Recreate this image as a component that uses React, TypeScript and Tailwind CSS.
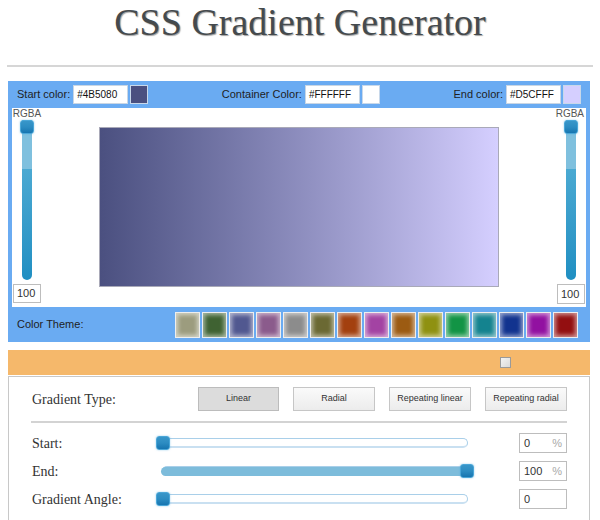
import React from "react";

const swatches = [
  "#9c9c7e",
  "#3f6232",
  "#515890",
  "#8b5b8c",
  "#8c8c8c",
  "#6b6933",
  "#a3400f",
  "#a343a3",
  "#9c5b12",
  "#8f9111",
  "#129445",
  "#14838f",
  "#12338f",
  "#9211a1",
  "#930f10",
];

function Thumb({ className = "" }: { className?: string }) {
  return (
    <div
      className={
        "w-[14px] h-[14px] rounded-[3px] border border-[#4aa6d8] bg-gradient-to-b from-[#3896c9] via-[#2c8cc2] to-[#1675b0] shadow-[0_0_2px_rgba(80,170,220,0.6)] " +
        className
      }
    />
  );
}

function VSlider() {
  return (
    <div className="relative w-[14px] h-[160px] flex justify-center">
      <div className="w-[10px] h-full rounded-b-full rounded-t-[3px] overflow-hidden flex flex-col">
        <div className="h-[49px] bg-[#7fc0de]" />
        <div className="flex-1 bg-gradient-to-b from-[#4aa9d2] to-[#1f8fc2]" />
      </div>
      <Thumb className="absolute top-0 left-0 h-[13px]" />
    </div>
  );
}

function HSlider({ full }: { full?: boolean }) {
  return (
    <div className="relative w-[318px] h-[14px] flex items-center">
      <div className="mx-[6px] flex-1 h-[10px] rounded-full border border-[#a9cfe9] border-b-2 border-b-[#c9e0f1] bg-white overflow-hidden">
        {full && <div className="w-full h-full bg-[#7dbcdb]" />}
      </div>
      {full && (
        <div className="absolute left-[5px] right-[6px] top-[3px] h-[9px] rounded-full bg-[#7dbcdb]" />
      )}
      <Thumb className={"absolute top-0 " + (full ? "right-0" : "left-0")} />
    </div>
  );
}

function ColorField({ label, value, color }: { label: string; value: string; color: string }) {
  return (
    <div className="flex items-center">
      <span className="text-[11px] text-[#1e1e1e]">{label}</span>
      <div className="ml-[3px] w-[55px] h-[19px] bg-white border border-[#c9d6e4] flex items-center pl-[3px] text-[10px] text-[#111]">
        {value}
      </div>
      <div
        className="ml-[2px] w-[18px] h-[19px] border border-[#c8d8ea]"
        style={{ backgroundColor: color }}
      />
    </div>
  );
}

function Btn({ label, active, w }: { label: string; active?: boolean; w: string }) {
  return (
    <div
      className={
        "h-[24px] flex items-center justify-center text-[9px] text-[#333] border " +
        w +
        " " +
        (active
          ? "bg-[#dcdcdc] border-[#bcbcbc]"
          : "bg-gradient-to-b from-[#fafafa] to-[#ececec] border-[#c6c6c6]")
      }
    >
      {label}
    </div>
  );
}

function ValueBox({ value, pct }: { value: string; pct?: boolean }) {
  return (
    <div className="w-[48px] h-[20px] border border-[#bdbdbd] bg-white flex items-center justify-between px-[4px] text-[11px] text-[#333]">
      <span>{value}</span>
      {pct && <span className="text-[#a8a8a8]">%</span>}
    </div>
  );
}

export default function App() {
  return (
    <div className="w-[600px] h-[520px] overflow-hidden bg-white font-['Liberation_Sans',Arial,sans-serif]">
      <h1 className="pt-[3px] text-center text-[38px] leading-[38px] text-[#454a4d] font-['Liberation_Serif','Times_New_Roman',serif] [text-shadow:1px_1px_1px_#a0a0a0]">
        CSS Gradient Generator
      </h1>
      <div className="mx-[7px] mt-[24px] h-[2px] bg-[#d6d6d6]" />

      {/* Blue panel */}
      <div className="ml-[8px] w-[582px] mt-[14px] bg-[#6aabf2]">
        <div className="h-[27px] px-[9px] flex items-center justify-between">
          <ColorField label="Start color:" value="#4B5080" color="#4B5080" />
          <ColorField label="Container Color:" value="#FFFFFF" color="#FFFFFF" />
          <ColorField label="End color:" value="#D5CFFF" color="#D5CFFF" />
        </div>
        <div className="mx-[4px] h-[199px] bg-white grid grid-cols-[30px_1fr_30px]">
          <div className="flex flex-col items-center">
            <div className="h-[12px] text-[10px] leading-[12px] text-[#555]">RGBA</div>
            <VSlider />
            <div className="mt-[4px] w-[28px] h-[19px] border border-[#bdbdbd] text-[11px] text-[#333] flex items-center pl-[3px]">
              100
            </div>
          </div>
          <div className="flex justify-center pt-[19px]">
            <div className="w-[400px] h-[160px] border border-[#a9a9b8] bg-gradient-to-r from-[#4B5080] to-[#D5CFFF]" />
          </div>
          <div className="flex flex-col items-center">
            <div className="h-[12px] text-[10px] leading-[12px] text-[#555] self-end pr-[2px]">RGBA</div>
            <VSlider />
            <div className="mt-[4px] w-[28px] h-[20px] border border-[#bdbdbd] text-[11px] text-[#333] flex items-center pl-[3px]">
              100
            </div>
          </div>
        </div>
        <div className="h-[35px] pl-[9px] pr-[12px] flex items-center justify-between">
          <span className="text-[11px] text-[#1e1e1e]">Color Theme:</span>
          <div className="flex gap-[2px]">
            {swatches.map((c) => (
              <div
                key={c}
                className="w-[25px] h-[26px] border border-[#eeeeee] shadow-[inset_0_0_4px_2px_rgba(255,255,255,0.55)]"
                style={{ backgroundColor: c }}
              />
            ))}
          </div>
        </div>
      </div>

      {/* Orange bar */}
      <div className="ml-[8px] w-[582px] mt-[8px] h-[25px] bg-[#f5b86b] flex items-center justify-end pr-[79px]">
        <div className="w-[11px] h-[11px] border border-[#9a9a9a] bg-gradient-to-br from-[#f4f4f4] to-[#d9d9d9]" />
      </div>

      {/* Settings panel */}
      <div className="ml-[8px] w-[582px] mt-[1px] h-[160px] border border-[#c8c8c8] px-[22px] pt-[10px] font-['Liberation_Serif','Times_New_Roman',serif] text-[#333]">
        <div className="h-[24px] flex items-center">
          <span className="pl-[1px] text-[14px]">Gradient Type:</span>
          <div className="ml-auto flex gap-[14px] font-['Liberation_Sans',Arial,sans-serif]">
            <Btn label="Linear" active w="w-[81px]" />
            <Btn label="Radial" w="w-[82px]" />
            <Btn label="Repeating linear" w="w-[82px]" />
            <Btn label="Repeating radial" w="w-[82px]" />
          </div>
        </div>
        <div className="mt-[10px] h-[2px] bg-[#d3d3d3]" />
        <div className="mt-[10px] flex flex-col gap-[8px]">
          {[
            { label: "Start:", value: "0", pct: true, full: false },
            { label: "End:", value: "100", pct: true, full: true },
            { label: "Gradient Angle:", value: "0", pct: false, full: false },
          ].map((r) => (
            <div key={r.label} className="h-[20px] flex items-center">
              <span className="w-[125px] pl-[1px] text-[14px]">{r.label}</span>
              <HSlider full={r.full} />
              <div className="ml-auto font-['Liberation_Sans',Arial,sans-serif]">
                <ValueBox value={r.value} pct={r.pct} />
              </div>
            </div>
          ))}
        </div>
      </div>
    </div>
  );
}
